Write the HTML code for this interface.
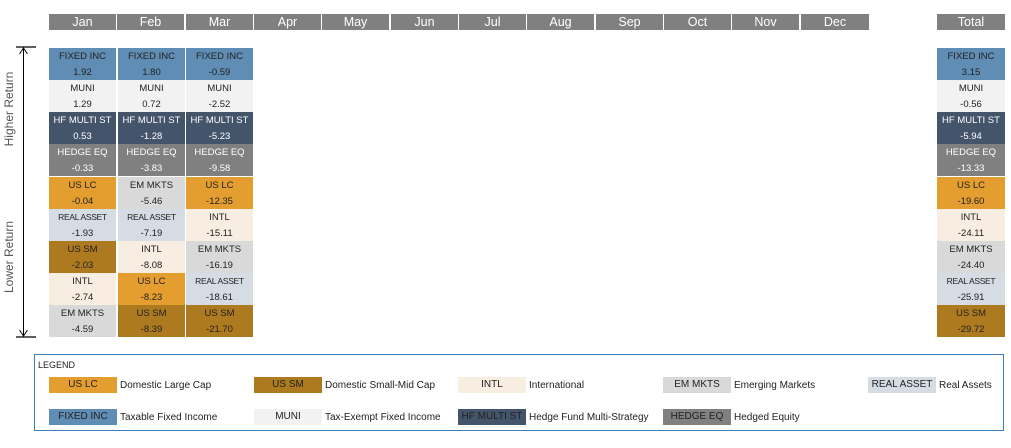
<!DOCTYPE html>
<html><head><style>
body{margin:0;width:1011px;height:448px;background:#fff;font-family:"Liberation Sans",sans-serif;position:relative;overflow:hidden}
.h{position:absolute;top:14px;height:16px;background:#808080;color:#fff;font-size:12.5px;line-height:16px;text-align:center}
.c{position:absolute;width:67px;height:32px;font-size:9.5px;text-align:center;color:#222}
.c div{height:16px;line-height:17px}
.fi{background:#5f8db3}.mu{background:#f2f2f2}.hf{background:#44546a;color:#fff}.he{background:#808080;color:#fff}
.lc{background:#e39e2f}.ra{background:#d6dce4}.sm{background:#ae7a1f}.in{background:#f7ede0}.em{background:#d9d9d9}
.sw{position:absolute;width:68px;height:16px;line-height:16px;font-size:10px;text-align:center;color:#222}
.lt{position:absolute;font-size:10px;color:#222;line-height:18px}
.rot{position:absolute;transform:rotate(-90deg);font-size:12px;color:#555;white-space:nowrap;transform-origin:center}
</style></head><body>
<div class="h" style="left:49px;width:67px">Jan</div>
<div class="h" style="left:117px;width:67px">Feb</div>
<div class="h" style="left:186px;width:67px">Mar</div>
<div class="h" style="left:254px;width:67px">Apr</div>
<div class="h" style="left:322px;width:67px">May</div>
<div class="h" style="left:391px;width:67px">Jun</div>
<div class="h" style="left:459px;width:67px">Jul</div>
<div class="h" style="left:527px;width:67px">Aug</div>
<div class="h" style="left:596px;width:67px">Sep</div>
<div class="h" style="left:664px;width:67px">Oct</div>
<div class="h" style="left:732px;width:67px">Nov</div>
<div class="h" style="left:801px;width:68px">Dec</div>
<div class="h" style="left:937px;width:68px">Total</div>

<svg style="position:absolute;left:0;top:0" width="45" height="345">
<line x1="16" y1="47" x2="36" y2="47" stroke="#000" stroke-width="1.3"/>
<line x1="16" y1="337" x2="36" y2="337" stroke="#000" stroke-width="1.3"/>
<line x1="23.5" y1="48" x2="23.5" y2="336" stroke="#000" stroke-width="1"/>
<polyline points="19.5,54 23.5,48 27.5,54" fill="none" stroke="#000"/>
<polyline points="19.5,330 23.5,336 27.5,330" fill="none" stroke="#000"/>
</svg>
<div class="rot" style="left:-31px;top:102px;width:80px;text-align:center">Higher Return</div>
<div class="rot" style="left:-31px;top:250px;width:80px;text-align:center">Lower Return</div>

<div id="g"></div>
<script>
var cols=[[49,[["fi","FIXED INC","1.92"],["mu","MUNI","1.29"],["hf","HF MULTI ST","0.53"],["he","HEDGE EQ","-0.33"],["lc","US LC","-0.04"],["ra","REAL ASSET","-1.93"],["sm","US SM","-2.03"],["in","INTL","-2.74"],["em","EM MKTS","-4.59"]]],
[118,[["fi","FIXED INC","1.80"],["mu","MUNI","0.72"],["hf","HF MULTI ST","-1.28"],["he","HEDGE EQ","-3.83"],["em","EM MKTS","-5.46"],["ra","REAL ASSET","-7.19"],["in","INTL","-8.08"],["lc","US LC","-8.23"],["sm","US SM","-8.39"]]],
[186,[["fi","FIXED INC","-0.59"],["mu","MUNI","-2.52"],["hf","HF MULTI ST","-5.23"],["he","HEDGE EQ","-9.58"],["lc","US LC","-12.35"],["in","INTL","-15.11"],["em","EM MKTS","-16.19"],["ra","REAL ASSET","-18.61"],["sm","US SM","-21.70"]]],
[937,[["fi","FIXED INC","3.15"],["mu","MUNI","-0.56"],["hf","HF MULTI ST","-5.94"],["he","HEDGE EQ","-13.33"],["lc","US LC","-19.60"],["in","INTL","-24.11"],["em","EM MKTS","-24.40"],["ra","REAL ASSET","-25.91"],["sm","US SM","-29.72"]]]];
var h="";cols.forEach(function(c){c[1].forEach(function(r,i){var fs=r[1]=="REAL ASSET"?"font-size:8.5px;letter-spacing:-0.3px":"";h+='<div class="c '+r[0]+'" style="left:'+c[0]+'px;top:'+(47.7+i*32.2).toFixed(1)+'px;width:'+(c[0]==937?68:67)+'px"><div style="'+fs+'">'+r[1]+'</div><div>'+r[2]+'</div></div>';});});
document.getElementById("g").innerHTML=h;
</script>

<div style="position:absolute;left:34px;top:354px;width:970px;height:77px;border:1px solid #3d7fb8;box-sizing:border-box"></div>
<div class="lt" style="left:38px;top:356px;font-size:9px">LEGEND</div>
<div class="sw lc" style="left:49px;top:377px">US LC</div><div class="lt" style="left:120px;top:377px">Domestic Large Cap</div>
<div class="sw sm" style="left:254px;top:377px">US SM</div><div class="lt" style="left:325px;top:377px">Domestic Small-Mid Cap</div>
<div class="sw in" style="left:458px;top:377px">INTL</div><div class="lt" style="left:529px;top:377px">International</div>
<div class="sw em" style="left:663px;top:377px">EM MKTS</div><div class="lt" style="left:734px;top:377px">Emerging Markets</div>
<div class="sw ra" style="left:868px;top:377px">REAL ASSET</div><div class="lt" style="left:939px;top:377px">Real Assets</div>
<div class="sw fi" style="left:49px;top:409px">FIXED INC</div><div class="lt" style="left:120px;top:409px">Taxable Fixed Income</div>
<div class="sw mu" style="left:254px;top:409px">MUNI</div><div class="lt" style="left:325px;top:409px">Tax-Exempt Fixed Income</div>
<div class="sw hf" style="left:458px;top:409px">HF MULTI ST</div><div class="lt" style="left:529px;top:409px">Hedge Fund Multi-Strategy</div>
<div class="sw he" style="left:663px;top:409px">HEDGE EQ</div><div class="lt" style="left:734px;top:409px">Hedged Equity</div>
</body></html>
